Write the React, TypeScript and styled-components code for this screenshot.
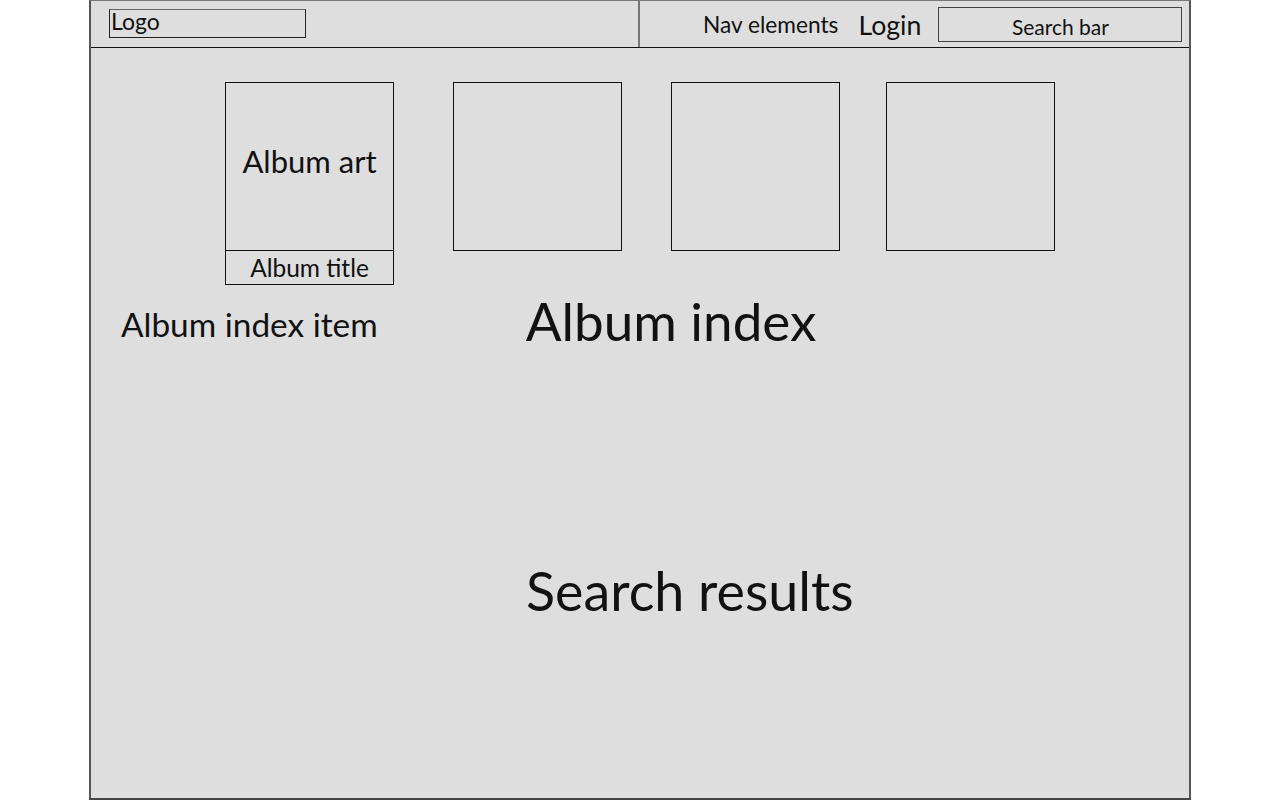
import React from "react";
import styled, { createGlobalStyle } from "styled-components";

const GlobalStyle = createGlobalStyle`
    html, body {
        margin: 0;
        padding: 0;
        background: #ffffff;
        font-family: Lato, "Liberation Sans", sans-serif;
        color: #111;
    }
    * { box-sizing: border-box; }
`;

const Frame = styled.div`
    margin-left: 89px;
    width: 1102px;
    height: 800px;
    background: #dedede;
    border-left: 2px solid #555;
    border-right: 2px solid #555;
    border-top: 1px solid #777;
    border-bottom: 2px solid #444;
    display: flex;
    flex-direction: column;
`;

const Header = styled.header`
    height: 47px;
    border-bottom: 1px solid #111;
    display: flex;
`;

const HeaderLeft = styled.div`
    width: 549px;
    border-right: 2px solid #777;
    padding: 8px 0 0 18px;
`;

const LogoBox = styled.div`
    width: 197px;
    height: 29px;
    border: 1px solid #222;
    border-top-color: #666;
    font-size: 23px;
    line-height: 22px;
    padding-left: 1px;
`;

const HeaderRight = styled.div`
    flex: 1;
    display: flex;
    align-items: center;
    padding-left: 63px;
    padding-top: 1px;
`;

const NavText = styled.span<{ $size: number; $ml?: number }>`
    font-size: ${(p) => p.$size}px;
    margin-left: ${(p) => p.$ml ?? 0}px;
    white-space: nowrap;
`;

const SearchBox = styled.div`
    margin-left: 17px;
    width: 244px;
    height: 35px;
    border: 1px solid #444;
    display: flex;
    align-items: center;
    justify-content: center;
    font-size: 21px;
    padding-top: 3px;
`;

const Body = styled.main`
    flex: 1;
    display: flex;
    flex-direction: column;
`;

const CardRow = styled.div`
    display: flex;
    align-items: flex-start;
    padding-top: 34px;
`;

const Card = styled.div<{ $ml: number }>`
    margin-left: ${(p) => p.$ml}px;
    width: 169px;
    display: flex;
    flex-direction: column;
    border: 1px solid #111;
`;

const Art = styled.div`
    height: 167px;
    display: flex;
    align-items: center;
    justify-content: center;
    font-size: 31px;
    padding-bottom: 12px;
`;

const Title = styled.div`
    height: 34px;
    border-top: 1px solid #111;
    display: flex;
    align-items: center;
    justify-content: center;
    font-size: 24.5px;
`;

const LabelRow = styled.div`
    display: flex;
    align-items: center;
    margin-top: 5px;
    height: 60px;
`;

const Label = styled.div<{ $size: number; $ml: number; $pt?: number }>`
    font-size: ${(p) => p.$size}px;
    margin-left: ${(p) => p.$ml}px;
    padding-top: ${(p) => p.$pt ?? 0}px;
    white-space: nowrap;
`;

const ResultsArea = styled.div`
    flex: 1;
    display: flex;
    padding-top: 208px;
`;

const cards = [
    { ml: 134, label: true },
    { ml: 59, label: false },
    { ml: 49, label: false },
    { ml: 46, label: false },
];

export default function App() {
    return (
        <>
            <GlobalStyle />
            <Frame>
                <Header>
                    <HeaderLeft>
                        <LogoBox>Logo</LogoBox>
                    </HeaderLeft>
                    <HeaderRight>
                        <NavText $size={22.7}>Nav elements</NavText>
                        <NavText $size={26.7} $ml={20}>Login</NavText>
                        <SearchBox>Search bar</SearchBox>
                    </HeaderRight>
                </Header>
                <Body>
                    <CardRow>
                        {cards.map((c, i) => (
                            <Card $ml={c.ml} key={i}>
                                <Art>{c.label ? "Album art" : ""}</Art>
                                {c.label && <Title>Album title</Title>}
                            </Card>
                        ))}
                    </CardRow>
                    <LabelRow>
                        <Label $size={33.4} $ml={30} $pt={8}>Album index item</Label>
                        <Label $size={53} $ml={148}>Album index</Label>
                    </LabelRow>
                    <ResultsArea>
                        <Label $size={53.8} $ml={435}>Search results</Label>
                    </ResultsArea>
                </Body>
            </Frame>
        </>
    );
}
